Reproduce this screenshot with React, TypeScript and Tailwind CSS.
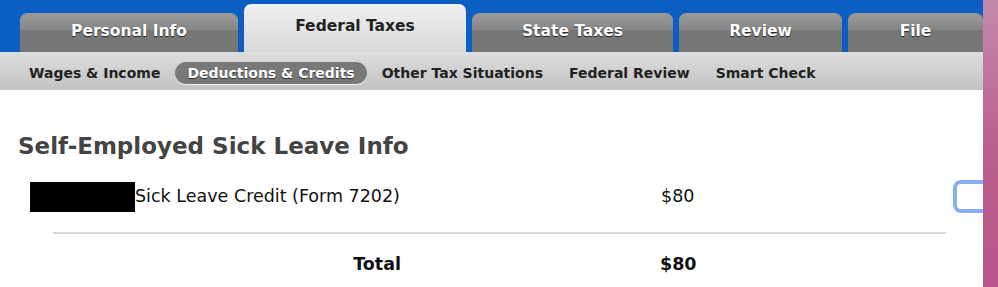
import React from 'react';

const font = { fontFamily: '"DejaVu Sans", Verdana, sans-serif' };

const tabs = [
  { label: 'Personal Info', width: 'w-[218px]' },
  { label: 'Federal Taxes', width: 'w-[222px]', active: true },
  { label: 'State Taxes', width: 'w-[201px]' },
  { label: 'Review', width: 'w-[163px]' },
  { label: 'File', width: 'w-[135px]' },
];

const subItems = [
  { label: 'Wages & Income' },
  { label: 'Deductions & Credits', active: true },
  { label: 'Other Tax Situations' },
  { label: 'Federal Review' },
  { label: 'Smart Check' },
];

function Tab({ label, width, active }: { label: string; width: string; active?: boolean }) {
  if (active) {
    return (
      <div
        className={`${width} h-[48px] rounded-t-[7px] bg-gradient-to-b from-[#f0f0f0] to-[#d9d9d9] flex items-start justify-center pt-[11px] text-[15.5px] font-bold text-[#222]`}
      >
        {label}
      </div>
    );
  }
  return (
    <div
      className={`${width} h-[39px] rounded-t-[7px] overflow-hidden flex flex-col relative border-t border-[#9a9a9a]`}
    >
      <div className="h-[16px] bg-gradient-to-b from-[#9a9a9a] to-[#858585]" />
      <div className="flex-1 bg-[#777]" />
      <div className="absolute inset-0 flex items-start justify-center pt-[6px] text-[15.5px] font-bold text-white [text-shadow:0_1px_1px_rgba(0,0,0,0.7)]">
        {label}
      </div>
    </div>
  );
}

export default function App() {
  return (
    <div className="w-[998px] h-[287px] flex overflow-hidden bg-white" style={font}>
      <div className="w-[983px] flex flex-col overflow-hidden">
        <div className="h-[52px] bg-[#0b5fc2] flex items-end pl-[20px] gap-[6px] shrink-0">
          {tabs.map((t) => (
            <Tab key={t.label} {...t} />
          ))}
        </div>
        <div className="h-[38px] shrink-0 bg-gradient-to-b from-[#dedede] to-[#c2c2c2] flex items-center gap-[26px] pl-[29px] pt-[4px] text-[14px] font-bold text-[#222]">
          {subItems.map((s) =>
            s.active ? (
              <span
                key={s.label}
                className="mx-[-11px] h-[22px] px-[12px] rounded-full bg-[#787878] text-white flex items-center [text-shadow:0_1px_1px_rgba(0,0,0,0.6)] shadow-[0_1px_0_rgba(255,255,255,0.8)]"
              >
                {s.label}
              </span>
            ) : (
              <span key={s.label}>{s.label}</span>
            ),
          )}
        </div>
        <div className="flex-1 flex flex-col">
          <h1 className="mt-[41px] ml-[18px] text-[23px] font-bold text-[#444] leading-[30px]">
            Self-Employed Sick Leave Info
          </h1>
          <div className="mt-[19px] flex items-center h-[33px] text-[17.5px] text-[#111]">
            <div className="w-[661px] shrink-0 pl-[30px] flex items-center">
              <div className="w-[105px] h-[30px] bg-black" />
              <span>Sick Leave Credit (Form 7202)</span>
            </div>
            <span className="w-[292px] shrink-0">$80</span>
            <div className="w-[40px] h-[33px] shrink-0 rounded-[8px] border-[4px] border-[#88aef1]" />
          </div>
          <div className="mt-[19px] ml-[53px] w-[893px] h-[2px] bg-[#dadada]" />
          <div className="mt-[18px] flex items-center h-[24px] text-[17.5px] font-bold text-[#111]">
            <span className="w-[401px] text-right">Total</span>
            <span className="ml-[259px]">$80</span>
          </div>
        </div>
      </div>
      <div className="w-[15px] bg-gradient-to-b from-[#c48aab] via-[#b9618f] to-[#b85588]" />
    </div>
  );
}
